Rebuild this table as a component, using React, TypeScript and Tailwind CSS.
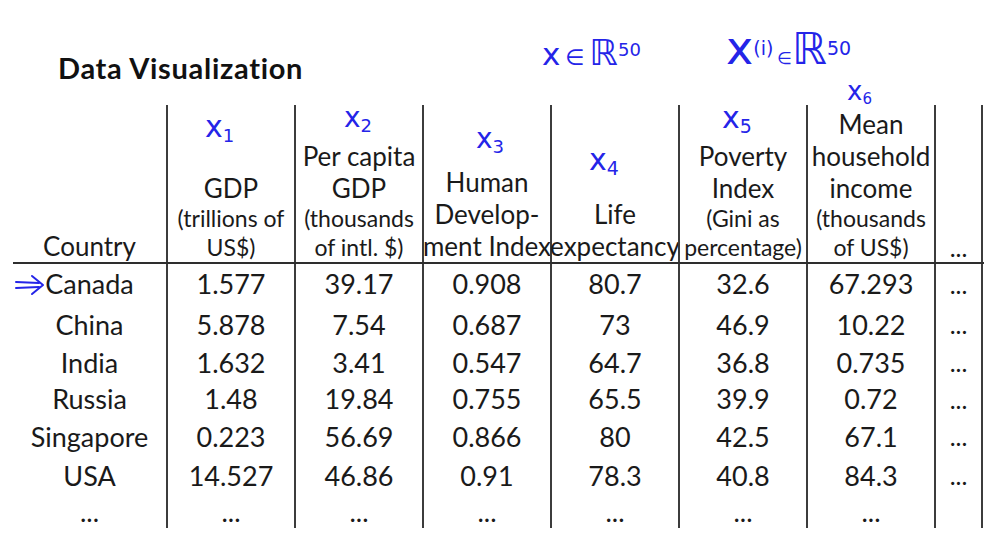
const BIG = 'text-[26px] leading-[32px]';
const SMALL = 'text-[23px] leading-[29px]';

type Line = { t: string; small?: boolean };

const HEADERS: Line[][] = [
  [{ t: 'GDP' }, { t: '(trillions of', small: true }, { t: 'US$)', small: true }],
  [{ t: 'Per capita' }, { t: 'GDP' }, { t: '(thousands', small: true }, { t: 'of intl. $)', small: true }],
  [{ t: 'Human' }, { t: 'Develop-' }, { t: 'ment Index' }],
  [{ t: 'Life' }, { t: 'expectancy' }],
  [{ t: 'Poverty' }, { t: 'Index' }, { t: '(Gini as', small: true }, { t: 'percentage)', small: true }],
  [{ t: 'Mean' }, { t: 'household' }, { t: 'income' }, { t: '(thousands', small: true }, { t: 'of US$)', small: true }],
];

const ROWS: { cells: string[]; h: string }[] = [
  { cells: ['Canada', '1.577', '39.17', '0.908', '80.7', '32.6', '67.293'], h: 'h-[41px]' },
  { cells: ['China', '5.878', '7.54', '0.687', '73', '46.9', '10.22'], h: 'h-[40px]' },
  { cells: ['India', '1.632', '3.41', '0.547', '64.7', '36.8', '0.735'], h: 'h-[36px]' },
  { cells: ['Russia', '1.48', '19.84', '0.755', '65.5', '39.9', '0.72'], h: 'h-[37px]' },
  { cells: ['Singapore', '0.223', '56.69', '0.866', '80', '42.5', '67.1'], h: 'h-[38px]' },
  { cells: ['USA', '14.527', '46.86', '0.91', '78.3', '40.8', '84.3'], h: 'h-[40px]' },
  { cells: ['...', '...', '...', '...', '...', '...', '...'], h: 'h-[32px]' },
];

const COL = 'w-[128px] shrink-0 border-l-2 border-[#3c3c3c]';

function Ink({ className, children }: { className: string; children: React.ReactNode }) {
  return (
    <span className={`absolute leading-none whitespace-nowrap text-[#2424e8] font-['DejaVu_Sans',sans-serif] ${className}`}>
      {children}
    </span>
  );
}

export default function App() {
  return (
    <div className="relative w-[1006px] h-[538px] overflow-hidden bg-white text-[#1a1a1a] font-['Lato',sans-serif]">
      {/* Title */}
      <div className="h-[105px] pl-[58px] pt-[52px]">
        <h1 className="text-[29px] leading-[32px] font-bold tracking-[0.7px] text-[#111]">Data Visualization</h1>
      </div>

      {/* Table */}
      <div className="ml-[13px] w-[971px]">
        {/* header */}
        <div className="flex h-[159px] border-b-2 border-[#2e2e2e]">
          <div className="w-[153px] shrink-0 flex flex-col justify-end items-center">
            <span className={BIG}>Country</span>
          </div>
          {HEADERS.map((lines, i) => (
            <div key={i} className={`${COL} flex flex-col justify-end items-center text-center whitespace-nowrap`}>
              {lines.map((l, j) => (
                <span key={j} className={l.small ? SMALL : BIG}>
                  {l.t}
                </span>
              ))}
            </div>
          ))}
          <div className="w-[49px] shrink-0 border-x-2 border-[#3c3c3c] flex flex-col justify-end items-center">
            <span className="text-[25px] leading-[29px]">...</span>
          </div>
        </div>

        {/* body */}
        {ROWS.map((row, r) => (
          <div key={r} className={`flex ${row.h}`}>
            <div className="w-[153px] shrink-0 flex items-center justify-center text-[27px]">{row.cells[0]}</div>
            {row.cells.slice(1).map((c, i) => (
              <div key={i} className={`${COL} flex items-center justify-center text-[27px]`}>
                {c}
              </div>
            ))}
            <div className="w-[49px] shrink-0 border-x-2 border-[#3c3c3c] flex items-center justify-center text-[25px]">
              {r < ROWS.length - 1 ? '...' : ''}
            </div>
          </div>
        ))}
      </div>

      {/* pointer arrow at Canada */}
      <svg className="absolute left-[15px] top-[274px]" width="30" height="22" viewBox="0 0 30 22" fill="none">
        <path d="M1 8 L24 9 M1 14 L24 13" stroke="#2424e8" strokeWidth="2" strokeLinecap="round" />
        <path d="M17 2 L28 11 L17 20" stroke="#2424e8" strokeWidth="2" strokeLinecap="round" strokeLinejoin="round" />
      </svg>

      {/* handwritten annotations */}
      <Ink className="left-[205px] top-[112px] text-[30px]">
        x<sub className="text-[18px]">1</sub>
      </Ink>
      <Ink className="left-[344px] top-[104px] text-[28px]">
        x<sub className="text-[18px]">2</sub>
      </Ink>
      <Ink className="left-[476px] top-[125px] text-[28px]">
        x<sub className="text-[18px]">3</sub>
      </Ink>
      <Ink className="left-[589px] top-[145px] text-[30px]">
        x<sub className="text-[19px]">4</sub>
      </Ink>
      <Ink className="left-[722px] top-[103px] text-[30px]">
        x<sub className="text-[19px]">5</sub>
      </Ink>
      <Ink className="left-[847px] top-[78px] text-[26px]">
        x<sub className="text-[15px]">6</sub>
      </Ink>
      <Ink className="left-[542px] top-[35px] text-[31px]">
        x<span className="text-[22px] px-[5px]">∈</span>
        <span className="text-[36px]">ℝ</span>
        <sup className="text-[18px]">50</sup>
      </Ink>
      <Ink className="left-[726px] top-[25px] text-[46px]">
        x<sup className="text-[19px]">(i)</sup>
        <span className="text-[17px] pl-[4px]">∈</span>
        <span className="text-[44px]">ℝ</span>
        <sup className="text-[19px]">50</sup>
      </Ink>
    </div>
  );
}
